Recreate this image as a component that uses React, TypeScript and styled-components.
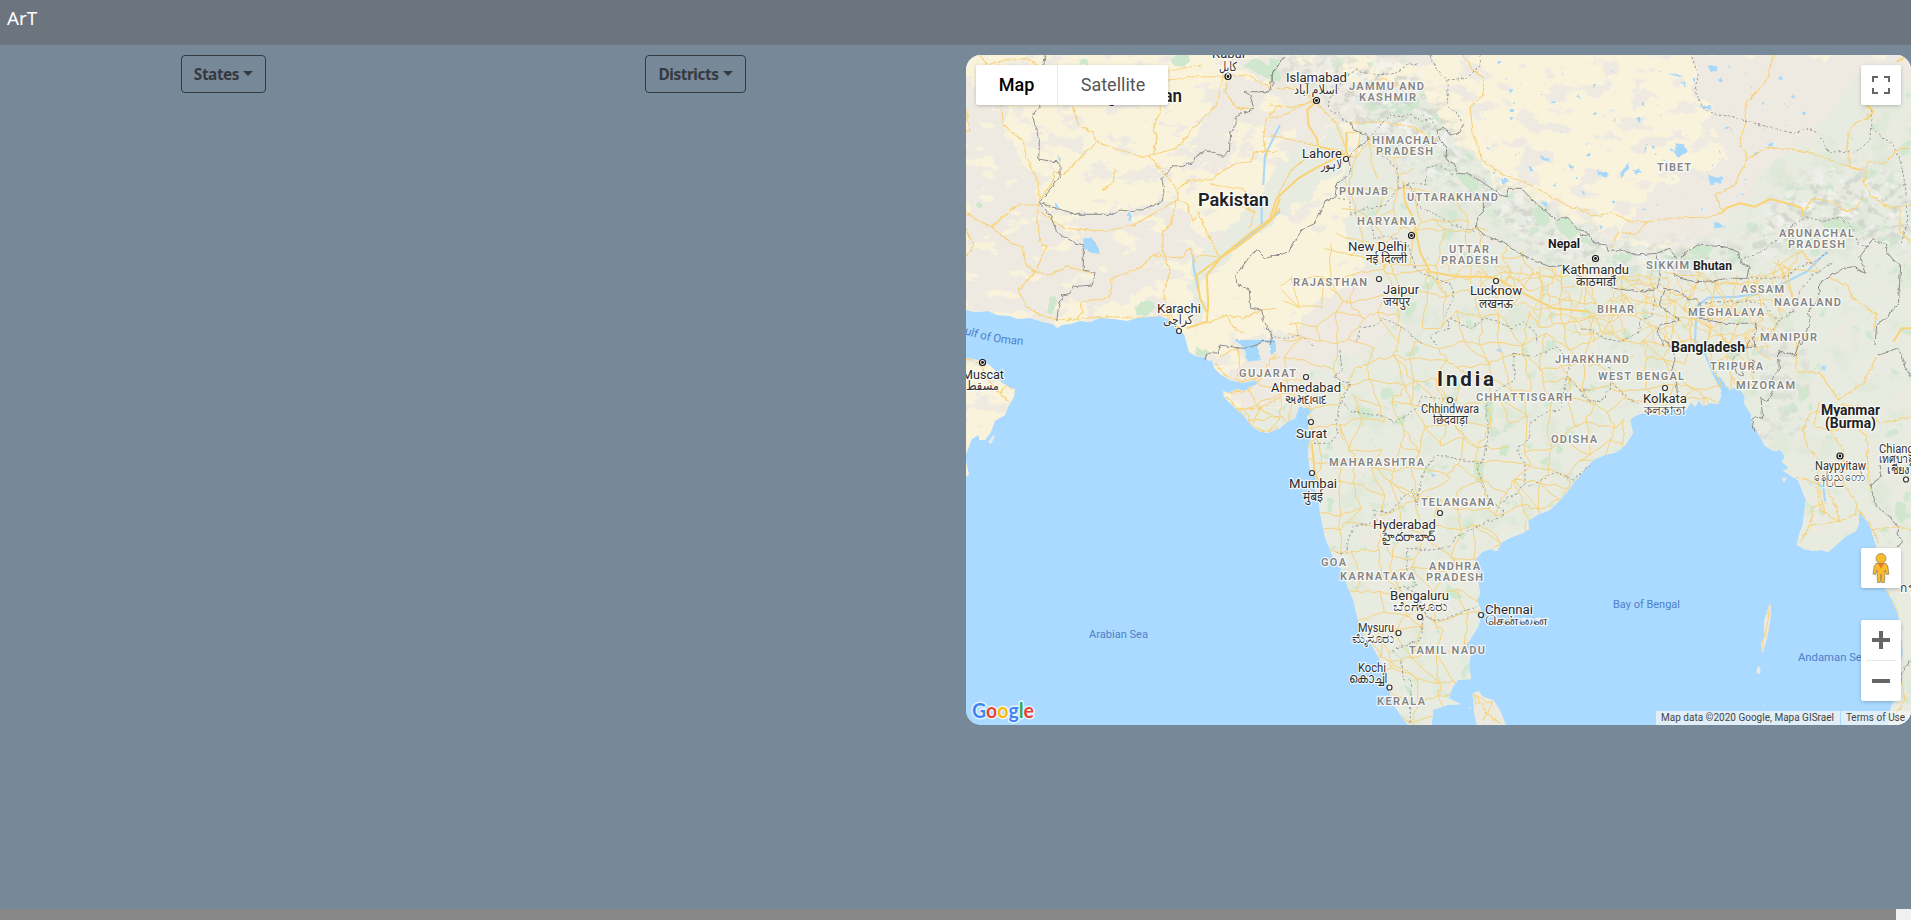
import React from 'react';
import styled, { createGlobalStyle } from 'styled-components';

const GlobalStyle = createGlobalStyle`
  * { box-sizing: border-box; }
  html, body { margin: 0; height: 100%; overflow: hidden; }
  body { background: #778899; font-family: "Noto Sans", "Open Sans", sans-serif; }
`;

const Page = styled.div`
  display: flex;
  flex-direction: column;
  height: 920px;
  background: #778899;
`;
const Navbar = styled.header`
  height: 45px;
  padding: 4px 7px;
  background: #6c757d;
`;
const Brand = styled.span`
  display: block;
  color: #fff;
  font-size: 18.8px;
  line-height: 28px;
`;
const Content = styled.main`
  flex: 1;
  display: grid;
  grid-template-columns: 447px 497px 1fr;
  padding-top: 10px;
`;
const Column = styled.section`
  display: flex;
  justify-content: center;
  align-items: flex-start;
`;
const DropdownButton = styled.button<{ $width: number }>`
  display: flex;
  align-items: center;
  justify-content: center;
  gap: 4px;
  width: ${(p) => p.$width}px;
  height: 38px;
  padding: 0;
  border: 1px solid #343a40;
  border-radius: 4px;
  background: transparent;
  color: #343a40;
  font: 700 15.4px "Noto Sans", sans-serif;
  letter-spacing: -0.45px;
  &::after {
    content: "";
    margin-top: -1px;
    border-top: 5px solid #343a40;
    border-left: 5px solid transparent;
    border-right: 5px solid transparent;
  }
`;
const ScrollTrack = styled.footer`
  display: flex;
  justify-content: flex-end;
  height: 11px;
  background: #888;
`;
const ScrollCorner = styled.div`
  width: 15px;
  background: #f0f0f0;
`;
const MapFrame = styled.div`
  position: relative;
  height: 670px;
  margin-left: 22px;
  overflow: hidden;
  border-radius: 15px;
  background: #aadaff;
  font-family: Roboto, sans-serif;
`;
const MapDrawing = styled.svg`
  display: block;
  width: 100%;
  height: 100%;
`;
const Control = styled.div<{ $top: number; $height?: number }>`
  position: absolute;
  right: 10px;
  top: ${(p) => p.$top}px;
  width: 40px;
  height: ${(p) => p.$height ?? 40}px;
  display: flex;
  flex-direction: column;
  align-items: center;
  justify-content: center;
  border-radius: 2px;
  background: #fff;
  box-shadow: 0 1px 4px -1px rgba(0, 0, 0, 0.35);
`;
const MapTypes = styled.div`
  position: absolute;
  left: 10px;
  top: 10px;
  display: flex;
  height: 40px;
  border-radius: 2px;
  overflow: hidden;
  background: #fff;
  box-shadow: 0 1px 4px -1px rgba(0, 0, 0, 0.35);
`;
const MapType = styled.div<{ $active?: boolean }>`
  width: ${(p) => (p.$active ? 82 : 110)}px;
  text-align: center;
  font-size: 18px;
  line-height: 40px;
  font-weight: ${(p) => (p.$active ? 500 : 400)};
  color: ${(p) => (p.$active ? '#000' : '#565656')};
  border-right: ${(p) => (p.$active ? '1px solid #e9e9e9' : '0')};
`;
const ZoomHalf = styled.div`
  display: flex;
  align-items: center;
  justify-content: center;
  height: 40px;
  width: 40px;
`;
const ZoomRule = styled.div`
  width: 30px;
  height: 1px;
  background: #e6e6e6;
`;
const Attribution = styled.div`
  position: absolute;
  right: 0;
  bottom: 0;
  display: flex;
  gap: 1px;
  height: 14px;
`;
const Credit = styled.span<{ $width: number }>`
  width: ${(p) => p.$width}px;
  padding-right: 1px;
  text-align: center;
  background: rgba(245, 245, 245, 0.72);
  color: #444;
  font-size: 10px;
  line-height: 14px;
  white-space: nowrap;
`;

/* ---- Geography. Each sheet has an origin; its points are in thirds of a pixel. ---- */
type Sheet = 'nw' | 'n' | 'ne' | 'sw' | 's' | 'se';
const origins: Record<Sheet, [number, number]> = {
  nw: [960, 45], n: [1270, 45], ne: [1580, 45],
  sw: [960, 340], s: [1270, 340], se: [1580, 340],
};

const LAND = 'M940 309L966 310 975 312 988 311 997 315 1010 316 1017 319 1030 318 1043 322 1053 324 1057 328 1062 325 1071 324 1080 321 1090 322 1100 318 1113 319 1127 321 1137 318 1147 317 1160 316 1170 320 1174 325 1177 330 1184 334 1187 345 1189 352 1195 356 1205 357 1208 361 1212 360 1214 368 1220 374 1230 380 1243 383 1255 380 1258 384 1250 387 1245 391 1236 389 1229 393 1223 391 1224 397 1234 407 1243 415 1253 427 1259 431 1267 433 1280 428 1287 422 1295 418 1299 407 1303 406 1305 412 1308 420 1308 430 1312 437 1308 446 1308 455 1310 470 1316 478 1315 488 1319 500 1320 513 1325 537 1333 557 1342 570 1348 588 1353 599 1358 620 1365 638 1371 644 1380 660 1386 677 1389 690 1395 707 1402 717 1408 725 1408 735 1431 735 1433 710 1447 705 1460 704 1449 698 1452 688 1458 680 1471 679 1469 665 1471 653 1466 646 1471 638 1478 627 1482 613 1477 600 1480 594 1477 573 1475 560 1482 552 1490 549 1497 551 1502 542 1512 537 1523 533 1529 529 1528 521 1537 515 1550 510 1560 500 1567 492 1575 481 1583 472 1593 460 1605 455 1617 452 1626 444 1633 433 1630 420 1635 416 1643 413 1652 415 1663 415 1672 412 1680 413 1686 410 1691 402 1695 407 1699 400 1703 406 1711 403 1718 404 1721 396 1727 391 1734 388 1740 389 1745 397 1744 403 1751 414 1751 422 1758 433 1765 446 1774 451 1780 450 1785 456 1782 462 1789 468 1783 471 1798 480 1802 490 1806 500 1804 515 1803 524 1799 535 1797 545 1804 549 1813 551 1822 550 1828 552 1836 545 1845 537 1856 531 1859 524 1859 512 1869 523 1873 536 1876 545 1878 560 1883 572 1885 588 1892 600 1898 614 1901 630 1903 654 1898 672 1899 690 1891 707 1888 725 1888 735 1940 735 1940 30 940 30Z';
const OMAN = 'M940 355L966 358 977 360 983 360 994 369 1001 382 1009 387 1015 389 1014 397 1008 407 1005 415 995 421 991 432 985 440 979 440 979 435 972 439 968 449 965 457 969 474 965 478 940 480Z';
const GREEN = 'M1365 100L1370 110 1358 130 1362 150 1345 165 1338 180 1350 205 1346 240 1362 262 1385 288 1398 320 1370 350 1325 363 1292 385 1282 410 1262 400 1210 450 1250 735 1940 735 1940 85 1860 70 1820 130 1775 160 1735 210 1690 248 1640 247 1580 225 1500 185 1447 130 1420 85 1400 85Z';
const HIMAL = 'M1240 50L1330 60 1400 55 1455 120 1462 160 1510 188 1570 220 1620 247 1690 243 1745 245 1790 180 1840 165 1911 180 1911 250 1850 240 1780 250 1690 275 1600 266 1540 255 1480 205 1440 185 1400 155 1350 120 1320 90Z';
const BEIGE = [
  'M966 75L1000 95 1012 140 1036 180 1050 220 1085 245 1082 290 1060 315 966 308Z',
  'M1240 60L1320 60 1390 110 1330 130 1290 160 1255 120 1225 165 1180 170 1200 120Z',
  'M1080 215L1140 205 1180 200 1205 250 1150 290 1100 310 1070 300Z',
  'M1240 345L1290 330 1370 260 1410 300 1420 360 1300 390 1250 420 1230 390Z',
  'M1690 55L1911 55 1911 150 1840 165 1770 215 1700 243 1620 238 1650 190 1730 160 1700 100Z',
  'M1420 510L1460 530 1440 590 1400 600 1380 550Z',
  'M1820 430L1840 430 1845 465 1815 455Z',
];

const borders: [Sheet, string][] = [
  ['nw', '255,30 252,60 240,180 218,215 238,285 236,343 300,352 300,395 238,472 345,508 460,508 480,495 520,500 560,488 605,472 612,440 606,400 640,362 665,365 700,352 705,335 735,317 765,323 790,335 808,320 812,265 828,240 828,210 882,192 870,150 850,140 925,140 940,120 935,90 955,60'],
  ['nw', '238,472 270,510 290,560 310,575 350,595 370,600 370,675 405,682 397,720 340,725 330,745 308,750 295,790 290,830'],
  ['nw', '960,628 915,640 895,618 880,620 828,690 830,715 868,735 872,790 905,795 910,825 935,870 930,900'],
  ['sw', '940,5 905,5 890,15 850,25 810,20 780,15 775,38 740,40 735,58'],
  ['n', '0,635 55,622 95,555 135,535 165,470 195,455 200,420 245,380 235,340 270,300 297,285 295,272 250,255 245,237'],
  ['n', '0,130 10,80 45,35'],
  ['n', '500,255 512,290 530,305 528,345 555,360 560,385 600,388 650,420 690,450 710,455 715,430 755,430 785,465 860,525 890,515 920,550 960,570'],
  ['n', '505,255 525,250 540,270 570,262 580,240'],
  ['n', '640,470 640,500 620,520 620,550 650,575 700,590 740,620 800,650 840,665 880,660 920,690 960,710'],
  ['ne', '0,567 30,575 45,595 80,600 85,620 120,615 170,630 230,625 270,610 290,640 280,685 300,700 345,710 400,708 440,700 500,700 508,665 485,655 475,620 430,605 350,600 320,620 300,650'],
  ['ne', '0,705 40,700 100,730 180,740 235,730 240,680 230,625'],
  ['ne', '250,730 300,740 325,765 345,760 360,775 360,820 430,835 525,835 530,855 520,880 525,905 490,910'],
  ['ne', '255,735 238,780 270,805 298,825 240,840 230,865 245,880 250,900'],
  ['ne', '880,580 890,590 920,595 920,620 945,650 962,660 955,780 930,800 925,815 890,840 885,900'],
  ['ne', '880,580 840,635 855,685 820,665 790,670 750,695 720,715 715,760 685,800 690,830 680,870 660,900'],
  ['se', '250,0 280,25 285,60 275,90 290,130 292,170'],
  ['se', '510,0 495,25 455,60 470,100 490,110 488,70 520,60 525,100'],
  ['se', '660,0 645,45 595,32 598,90 580,110 575,165 560,185 543,175 548,235 525,230 515,240 525,275'],
  ['se', '885,40 900,45 950,25 965,40 975,80 993,110'],
  ['se', '900,375 905,410 870,435 890,500 930,530 955,565 955,590 970,600 960,615 948,620'],
  ['se', '993,960 965,1000 962,1030'],
];
const dashed: [Sheet, string][] = [
  ['n', '245,237 220,225 205,200 190,205 175,180 180,155 205,135 215,100 260,75 320,90 375,85 420,55 440,60'],
  ['n', '297,285 330,240 360,210 395,215 420,205 450,230 480,220 505,255'],
  ['n', '480,30 500,75 530,105 590,100 630,60 632,30'],
  ['n', '530,105 535,150 530,180 565,210 580,240'],
  ['n', '330,320 380,370 385,430 345,480 290,490 240,510 240,465 205,460'],
  ['n', '385,430 420,420 440,480 500,510 550,540 615,560'],
  ['n', '400,425 430,410 465,420 470,370 500,360 560,390'],
  ['n', '305,540 310,580 360,575 415,600 440,680 470,690 545,720 550,760 525,810 540,850 480,870 500,900'],
  ['n', '540,820 600,850 650,820 730,850 760,830 800,870 800,900'],
  ['n', '0,870 50,880 90,870 130,900'],
  ['n', '260,890 270,850 320,840 340,820 400,850 460,900'],
  ['ne', '335,35 355,90 345,135 370,190 410,210 460,215 540,240 640,265 680,250 715,265 745,320 830,320 870,285 875,190'],
  ['ne', '875,250 940,300 965,360 978,440 980,540 962,600'],
  ['ne', '0,850 35,855 70,880 120,890 175,865 180,825 215,815 225,760'],
  ['ne', '490,640 540,625 600,575 640,540 680,515 730,530 780,515 820,550 835,600 865,605'],
  ['ne', '500,700 560,700 620,695 650,670 720,640 745,620'],
  ['ne', '360,775 420,770 510,768 550,775 595,830 570,870 540,850'],
  ['ne', '595,830 640,800 660,740 700,690 760,650'],
  ['s', '210,30 215,90 190,110 240,130 215,180 240,215 350,230 370,250 440,205 455,170 560,180'],
  ['s', '210,185 200,240 205,280 180,310 130,310'],
  ['s', '730,40 790,50 860,20 900,60 890,110 930,150 960,150'],
  ['s', '730,45 735,120 680,150 650,200 655,280 640,360 620,380 640,440 660,480 700,510 700,530 650,545 590,575 560,590 540,620 480,630 410,625 410,690 440,740 360,745'],
  ['s', '780,290 780,250 830,215 870,210 890,110'],
  ['s', '780,290 740,330 765,370 765,430 740,460 690,490'],
  ['s', '640,370 580,360 500,345 465,390 450,430 440,500 430,450 400,470 360,520 310,510 320,545 250,560 235,600 230,640 195,640'],
  ['s', '775,440 860,395 910,420 960,375'],
  ['s', '410,745 440,760 470,830 500,845 540,830 620,800'],
  ['s', '460,835 450,900 400,920 365,930 395,960 400,1020 425,1020 420,1150'],
  ['se', '0,150 20,180 60,185 90,150 95,100 70,50 30,40'],
  ['se', '95,130 150,180 180,190'],
];
const tracedRoads: [Sheet, string][] = [
  ['nw', '115,60 130,240 190,290 200,340 235,410 238,475 230,510 240,590 258,605 228,680 175,735 200,785 240,810 290,825'],
  ['nw', '18,500 50,525 95,545 155,595 185,605 200,660 225,680 270,690 320,665 400,685'],
  ['nw', '95,545 170,480 240,480'],
  ['nw', '18,190 30,255 18,265'], ['nw', '18,550 40,600 18,635'], ['nw', '60,30 80,60 130,45 200,40 240,65'],
  ['nw', '340,185 355,240 395,260 410,290 310,390 280,380 280,410 240,460'],
  ['nw', '410,290 460,310 545,335 580,330 585,300 590,270 578,250 600,200 605,110'],
  ['nw', '565,332 650,310 700,250 770,180 790,90 810,95'],
  ['nw', '625,105 700,95 800,95 860,90 920,120 935,135'],
  ['nw', '800,110 795,140 830,190 875,190'],
  ['nw', '565,332 600,370 650,430 655,465 680,475 700,530 715,500 740,560 780,640'],
  ['nw', '240,500 310,550 440,558 520,540 610,490 650,465 630,540 610,560 608,620 580,630 540,670 455,700 455,730 445,760 360,770 370,800 340,830'],
  ['nw', '655,430 690,405 750,405 800,370 830,355 870,350 880,325 910,318 950,320'],
  ['nw', '580,630 620,635 665,640 690,610 705,650 720,630 770,635'],
  ['nw', '750,415 780,425 850,430 865,470 835,480 885,500 870,550'],
  ['nw', '610,620 630,680 610,740 625,820 660,855'],
  ['nw', '290,825 350,822 440,815 540,820 580,815 630,810 660,855'],
  ['nw', '740,835 800,810 850,820 900,795 950,790'],
  ['nw', '800,810 820,850 850,865'], ['nw', '725,60 665,70 625,80'],
  ['nw', '465,370 460,410 425,440'], ['nw', '960,180 920,220 910,280 920,340'],
  ['n', '0,180 60,185 135,170 200,235 230,320'], ['n', '20,130 90,130 130,165 40,210 0,220'], ['n', '0,270 90,290 145,305 60,380 20,460'],
  ['n', '240,235 330,230 430,245 500,290'], ['n', '255,140 340,100 440,150'],
  ['ne', '585,30 570,60 565,100 530,140 495,180 498,230 480,290 505,340 480,380 465,420 405,450 430,500 400,515 270,520 200,530 150,530 90,500 50,515 0,495'],
  ['ne', '505,340 560,310 610,310 680,320 740,340 790,360 850,375 865,350 910,355 960,310 990,310'],
  ['ne', '865,200 860,220 820,240 805,270 800,320 815,370 865,380 850,410 870,450 930,490 993,480'],
  ['ne', '200,530 170,570 115,560 95,610'],
  ['ne', '670,500 700,460 760,470 800,500 825,490 850,460'],
  ['ne', '960,490 960,560 993,590'],
  ['ne', '750,700 800,720 820,760 890,810 880,860'],
  ['n', '580,30 610,75 640,100 640,150 600,185 610,270 640,350 700,390 760,410 820,440 860,465 910,490 960,495'],
  ['s', '35,120 100,120'],
  ['se', '650,0 650,95 720,100 775,180 850,130 890,50'],
  ['se', '690,220 735,215 790,195 850,200 900,250 993,230'],
  ['se', '690,220 670,270 680,320 710,350 715,430 735,520'],
  ['se', '720,180 700,260 750,270 830,260 860,290 865,400 870,450'],
  ['se', '750,270 790,330 790,430 830,490 830,520 780,545 690,555 660,610'],
  ['se', '710,440 720,510 780,545 760,480 740,450'],
  ['se', '645,410 720,430'], ['se', '835,510 870,550 895,610'], ['se', '840,520 870,570 950,560 993,570'],
  ['se', '920,750 950,810 955,830'], ['se', '690,550 700,500 740,490'],
  ['se', '570,790 565,830 560,860 550,900 546,930'],
  ['se', '960,1000 975,1080 950,1120'],
  ['sw', '18,55 60,70 80,110 120,160 150,190'], ['sw', '120,160 140,135 160,150'],
  ['sw', '795,165 830,205 880,260 920,275 955,260'], ['sw', '830,205 900,205 960,170'], ['sw', '880,250 900,205 865,150 800,160'], ['sw', '900,205 940,230 960,240'],
  ['sw', '765,70 800,110 850,125 900,110'], ['sw', '780,50 830,25 840,60 835,110'],
  ['sw', '865,150 910,110 930,60 960,50'],
  ['s', '620,1070 650,1120 690,1150'], ['s', '620,1090 670,1085 640,1140'],
];
const trunkRoads: [Sheet, string][] = [
  ['n', '138,170 112,195 115,240 140,280 145,305 220,320'], ['n', '0,520 20,460 85,400 145,365 225,325'],
  ['n', '230,260 228,320 240,340'], ['n', '400,410 405,470 430,520 440,570 450,620 480,680 560,695 640,695 680,700 740,735 850,790 960,800'],
  ['nw', '960,460 940,515 870,565 790,630 740,690 745,780 740,830 680,850'],
  ['nw', '960,490 930,530 840,600 780,640 710,690 720,760 740,800'],
  ['ne', '430,500 440,488 480,475 525,485 570,462 640,480 665,490 670,515'],
  ['ne', '860,180 880,200 860,225'], ['ne', '940,890 965,850 993,850'],
  ['ne', '990,30 950,50'],
  ['s', '125,310 135,400 150,430'], ['s', '500,510 520,520'],
];
const waters: [Sheet, string][] = [
  ['nw', '370,580 395,578 410,595 420,627 390,622 370,610'], ['nw', '505,500 512,502 512,528 503,525'],
  ['nw', '283,475 300,485 290,490'], ['nw', '290,335 303,340 300,350'],
  ['ne', '270,310 285,318 288,295 312,298 320,320 295,338 290,325 272,320'],
  ['ne', '385,390 410,398 435,395 420,415 388,418'], ['ne', '50,378 85,385 80,398 50,390'],
  ['ne', '120,385 140,360 142,350 148,370 125,395'], ['ne', '387,60 412,65 410,78 390,80'],
  ['ne', '160,378 175,370 185,380 165,388'], ['ne', '355,185 390,180 395,195'], ['ne', '300,110 320,115 315,125 310,120'],
  ['ne', '400,525 435,545 405,550'], ['ne', '445,60 450,65 447,72'], ['ne', '0,435 15,442 14,450'],
  ['ne', '260,85 310,92 295,97'], ['ne', '195,300 200,310 192,330'], ['ne', '60,540 70,545 65,555'],
  ['n', '810,330 835,340 840,350 820,345'], ['n', '695,400 720,405 700,415'], ['n', '770,360 790,370 785,380'],
  ['n', '680,45 695,50 680,60'], ['n', '710,135 730,132 725,142'], ['n', '895,355 910,365 905,375'],
  ['sw', '825,0 850,20 860,65 900,60 890,15 940,0'], ['s', '0,0 15,0 18,30 0,50'],
  ['s', '90,200 130,210 110,230 115,260 80,250'],
  ['s', '675,30 690,25 700,32'], ['s', '480,400 500,405 485,412'],
  ['se', '725,80 740,78 735,90'], ['se', '395,60 410,100 450,150 430,180 415,120'],
];
const rivers: [Sheet, string][] = [
  ['ne', '345,890 348,830 355,780 385,758 470,755 540,745 610,715 680,680 740,620'],
  ['nw', '910,420 915,330 960,240'], ['nw', '905,540 905,480'],
  ['nw', '960,500 870,570 780,640'], ['nw', '700,630 700,660 715,735'],
  ['se', '345,0 375,40 400,100 420,140'], ['se', '710,430 730,440 735,485'],
];
const islands: [Sheet, string][] = [
  ['se', '568,790 573,795 572,830 568,860 560,900 550,935 545,938 543,910 552,890 552,840 560,820'],
  ['se', '530,985 538,978 542,990 538,1002 530,1000'],
  ['s', '608,1060 625,1053 640,1070 670,1080 690,1110 708,1155 620,1155 612,1120'],
  ['s', '595,1100 605,1105 598,1106'], ['s', '545,1085 570,1090 568,1096'],
  ['sw', '85,305 100,285 105,290 92,313'], ['se', '605,415 622,412 612,428'], ['se', '550,1095 558,1098 552,1099'],
];
const greens: [Sheet, string][] = [
  ['nw', '630,45 650,30 690,30 690,50 670,65 640,62'], ['nw', '357,45 380,38 385,55 360,60'],
  ['nw', '525,790 550,765 580,770 585,790 555,815 530,810'], ['nw', '270,750 290,760 280,810 262,800'],
  ['nw', '850,60 890,40 960,80 960,115 900,90'], ['nw', '50,470 68,475 65,490 52,488'],
  ['n', '560,390 590,385 630,415 620,440 590,430'], ['n', '785,490 820,485 840,520 830,545 800,535'],
  ['n', '860,525 895,515 930,560 900,585 870,560'], ['n', '0,40 35,45 10,75 0,70'], ['n', '405,780 440,765 435,800 410,820'],
  ['n', '430,150 450,170 440,195 425,180'], ['n', '290,50 310,55 300,70'],
  ['ne', '320,620 350,600 400,610 375,640 345,630'], ['ne', '725,540 780,515 810,540 760,575 740,560'],
  ['ne', '100,630 160,625 150,650 110,645'], ['ne', '0,570 40,590 30,600 0,590'], ['ne', '450,825 500,820 490,835'], ['ne', '455,620 480,630 475,655'],
  ['sw', '708,25 745,30 740,50 705,45'],
  ['s', '255,200 300,205 315,230 270,235'], ['s', '380,230 410,220 400,260 380,250'], ['s', '610,360 640,365 640,430 615,420'],
  ['s', '640,190 670,180 665,250 645,240'], ['s', '530,730 580,770 560,780 530,760'], ['s', '175,470 190,480 185,520 172,510'],
  ['s', '690,320 720,310 710,350 690,345'], ['s', '760,320 790,310 780,330'], ['s', '400,1030 430,1050 420,1070'],
  ['se', '655,150 680,140 685,170 660,190'], ['se', '945,485 975,490 980,530 965,550 945,530'], ['se', '30,130 50,140 40,160'],
  ['s', '560,580 590,585 580,600'], ['s', '810,360 840,350 830,380'], ['s', '860,300 880,330 860,345'],
];

const toPath = ([sheet, pts]: [Sheet, string], close = false) => {
  const [ox, oy] = origins[sheet];
  return 'M' + pts.split(' ').map((p) => {
    const [x, y] = p.split(',').map(Number);
    return `${(ox + x / 3).toFixed(1)} ${(oy + y / 3).toFixed(1)}`;
  }).join('L') + (close ? 'Z' : '');
};
const joinPaths = (items: [Sheet, string][], close = false) => items.map((i) => toPath(i, close)).join('');

/* Local road network: a jittered lattice whose neighbours are joined by wavering lines. */
function roadMesh(x0: number, y0: number, x1: number, y1: number, step: number, seed: number) {
  let s = seed;
  const rnd = () => { s = (s * 1664525 + 1013904223) % 4294967296; return s / 4294967296; };
  const cols = Math.ceil((x1 - x0) / step), rows = Math.ceil((y1 - y0) / step);
  const pt: [number, number][][] = [];
  for (let r = 0; r <= rows; r++) {
    pt.push([]);
    for (let c = 0; c <= cols; c++) pt[r].push([x0 + (c + rnd() * 0.9) * step, y0 + (r + rnd() * 0.9) * step]);
  }
  let d = '';
  const link = (a: [number, number], b: [number, number]) => {
    d += `M${a[0].toFixed(1)} ${a[1].toFixed(1)}`;
    for (let i = 1; i < 4; i++) {
      const t = i / 4;
      d += `L${(a[0] + (b[0] - a[0]) * t + (rnd() - 0.5) * 4).toFixed(1)} ${(a[1] + (b[1] - a[1]) * t + (rnd() - 0.5) * 4).toFixed(1)}`;
    }
    d += `L${b[0].toFixed(1)} ${b[1].toFixed(1)}`;
  };
  for (let r = 0; r < rows; r++) for (let c = 0; c < cols; c++) {
    if (rnd() < 0.8) link(pt[r][c], pt[r][c + 1]);
    if (rnd() < 0.75) link(pt[r][c], pt[r + 1][c]);
    if (rnd() < 0.22) link(pt[r][c], pt[r + 1][c + 1]);
  }
  return d;
}
const mesh = roadMesh(1220, 100, 1800, 730, 21, 77);
const denseMesh = roadMesh(1420, 255, 1800, 350, 14, 19);
const MESH_AREA = 'M1345 120L1400 155 1425 180 1480 205 1490 238 1560 265 1660 268 1740 275 1790 255 1830 240 1820 270 1790 300 1765 380 1735 400 1700 440 1640 470 1560 540 1490 560 1490 700 1400 730 1300 560 1300 450 1250 435 1220 395 1270 360 1290 330 1280 285 1335 240 1345 190Z';
const DENSE_AREA = 'M1430 262L1560 268 1740 282 1790 260 1770 350 1600 345 1500 300Z';

/* ---- Labels: text, left, right, baseline ---- */
type Label = [string, number, number, number];
const regions: Label[] = [
  ['JAMMU AND', 1349, 1424, 90], ['KASHMIR', 1359, 1416, 101], ['HIMACHAL', 1372, 1437, 144], ['PRADESH', 1376, 1433, 155],
  ['PUNJAB', 1339, 1388, 195], ['UTTARAKHAND', 1407, 1498, 201], ['HARYANA', 1357, 1416, 225], ['UTTAR', 1449, 1489, 253],
  ['PRADESH', 1441, 1498, 264], ['RAJASTHAN', 1293, 1367, 286], ['TIBET', 1657, 1691, 171], ['ARUNACHAL', 1779, 1854, 237],
  ['PRADESH', 1788, 1845, 248], ['SIKKIM', 1646, 1689, 269], ['ASSAM', 1741, 1784, 293], ['NAGALAND', 1774, 1841, 306],
  ['BIHAR', 1597, 1634, 313], ['MEGHALAYA', 1688, 1764, 316], ['MANIPUR', 1760, 1817, 341], ['GUJARAT', 1239, 1296, 377],
  ['CHHATTISGARH', 1476, 1572, 401], ['MAHARASHTRA', 1329, 1424, 466], ['TELANGANA', 1421, 1494, 506], ['GOA', 1321, 1346, 566],
  ['KARNATAKA', 1340, 1415, 580], ['ANDHRA', 1429, 1480, 570], ['PRADESH', 1426, 1483, 581], ['TAMIL NADU', 1409, 1485, 654],
  ['KERALA', 1377, 1425, 705], ['JHARKHAND', 1555, 1629, 363], ['ODISHA', 1551, 1597, 443], ['TRIPURA', 1710, 1763, 370],
  ['WEST BENGAL', 1598, 1684, 380], ['MIZORAM', 1736, 1795, 389],
];
const cities: Label[] = [
  ['Kabul', 1212, 1245, 58], ['Islamabad', 1286, 1347, 82], ['Lahore', 1302, 1342, 158], ['New Delhi', 1348, 1407, 251],
  ['Jaipur', 1383, 1419, 294], ['Lucknow', 1470, 1522, 295], ['Kathmandu', 1562, 1629, 274], ['Karachi', 1157, 1201, 313],
  ['Muscat', 962, 1004, 379], ['Ahmedabad', 1271, 1341, 391.5], ['Surat', 1296, 1327, 438], ['Mumbai', 1289, 1337, 488],
  ['Hyderabad', 1373, 1436, 529], ['Bengaluru', 1390, 1449, 600], ['Chennai', 1485, 1533, 614], ['Kolkata', 1643, 1687, 403],
];
const towns: Label[] = [
  ['Chhindwara', 1421, 1479, 413], ['Mysuru', 1358, 1394, 632], ['Kochi', 1358, 1386, 672], ['Naypyitaw', 1815, 1866, 470],
  ['Chiang Mai', 1879, 1935, 453],
];
const locals: Label[] = [
  ['كابل', 1219, 1237, 71], ['اسلام آباد', 1294, 1338, 94], ['لاہور', 1321, 1342, 169], ['नई दिल्ली', 1366, 1407, 262.5],
  ['जयपुर', 1383, 1410, 306], ['लखनऊ', 1479, 1513, 308], ['काठमाडौं', 1576, 1616, 286], ['كراچى', 1163, 1193, 324],
  ['مسقط', 966, 999, 390], ['અમદાવાદ', 1285, 1327, 404], ['छिंदवाड़ा', 1433, 1468, 424], ['मुंबई', 1303, 1323, 500.5],
  ['హైదరాబాద్', 1382, 1436, 541], ['ಬೆಂಗಳೂರು', 1393, 1447, 611], ['ಮೈಸೂರು', 1352, 1394, 643],
  ['കൊച്ചി', 1349, 1387, 683], ['কলকাতা', 1644, 1686, 415], ['နေပြည်တော်', 1814, 1866, 481], ['เทศบาล', 1879, 1915, 463],
  ['เชียงให', 1887, 1922, 474], ['กรุง', 1900, 1920, 592], ['சென்னை', 1485, 1548, 625],
];
const countries: Label[] = [
  ['Afghanistan', 1090, 1182, 102], ['Pakistan', 1198, 1269, 206],
];
const smallCountries: Label[] = [
  ['Nepal', 1548, 1580, 248], ['Bhutan', 1693, 1732, 270],
];
const midCountries: Label[] = [['Bangladesh', 1671, 1745, 352], ['Myanmar', 1821, 1880, 415], ['(Burma)', 1825, 1876, 428]];
const seas: Label[] = [['Arabian Sea', 1089, 1148, 638], ['Bay of Bengal', 1613, 1680, 608], ['Andaman Sea', 1798, 1868, 661]];
const dots = [[1346, 159], [1379, 279], [1496, 281], [1179, 331], [1306, 377], [1311, 422], [1450, 400], [1312, 473], [1440, 513], [1420, 617], [1481, 615], [1398.5, 633], [1389.5, 687.5], [1665, 388], [1906, 479.5]];
const capitals = [[1228, 76.5], [1316.5, 100.5], [1411.5, 235.5], [1595.5, 258.5], [982.5, 362.5], [1840, 456]];

const MapText = styled.text<{ $size: number; $color: string; $weight?: number }>`
  font-family: Roboto, "Noto Sans", "DejaVu Sans", sans-serif;
  font-size: ${(p) => p.$size}px;
  font-weight: ${(p) => p.$weight ?? 400};
  fill: ${(p) => p.$color};
  paint-order: stroke;
  stroke: rgba(255, 255, 255, 0.8);
  stroke-width: 2.4px;
  stroke-linejoin: round;
`;
const SeaText = styled.text`
  font-family: Roboto, sans-serif;
  font-size: 11.5px;
  fill: #4f7fc9;
`;

function Labels({ items, size, color, weight, spaced }: { items: Label[]; size: number; color: string; weight?: number; spaced?: boolean }) {
  return (
    <>
      {items.map(([text, l, r, y]) => (
        <MapText key={text + l} x={l} y={y} textLength={r - l} lengthAdjust={spaced ? 'spacing' : 'spacingAndGlyphs'} $size={size} $color={color} $weight={weight}>
          {text}
        </MapText>
      ))}
    </>
  );
}

/* Threshold filter that turns noise into flat patches of one colour. */
function Patches({ id, fx, fy, seed, gain, cut, color }: { id: string; fx: number; fy: number; seed: number; gain: number; cut: number; color: string }) {
  return (
    <filter id={id} x="0" y="0" width="100%" height="100%" colorInterpolationFilters="sRGB">
      <feTurbulence type="fractalNoise" baseFrequency={`${fx} ${fy}`} numOctaves={4} seed={seed} />
      <feColorMatrix values={`0 0 0 0 0  0 0 0 0 0  0 0 0 0 0  ${gain} 0 0 0 ${-gain * cut}`} result="m" />
      <feFlood floodColor={color} />
      <feComposite in2="m" operator="in" />
    </filter>
  );
}

function Terrain() {
  const area = { x: 966, y: 55, width: 945, height: 670 };
  return (
    <MapDrawing viewBox="966 55 945 670">
      <defs>
        <clipPath id="land"><path d={LAND} /><path d={OMAN} /></clipPath>
        <clipPath id="roads"><path d={LAND} /><path d={OMAN} /><path d={joinPaths(islands, true)} /></clipPath>
        <clipPath id="green"><path d={GREEN} /></clipPath>
        <clipPath id="mesh"><path d={MESH_AREA} /></clipPath>
        <clipPath id="dense"><path d={DENSE_AREA} /></clipPath>
        <filter id="rough" x="-5%" y="-5%" width="110%" height="110%">
          <feTurbulence type="fractalNoise" baseFrequency="0.06" numOctaves={3} seed={4} result="n" />
          <feDisplacementMap in="SourceGraphic" in2="n" scale={22} xChannelSelector="R" yChannelSelector="G" />
          <feGaussianBlur stdDeviation="0.6" />
        </filter>
        <filter id="edge" x="-5%" y="-5%" width="110%" height="110%">
          <feTurbulence type="fractalNoise" baseFrequency="0.2" numOctaves={2} seed={9} result="n" />
          <feDisplacementMap in="SourceGraphic" in2="n" scale={4} xChannelSelector="R" yChannelSelector="G" />
        </filter>
        <filter id="soft"><feGaussianBlur stdDeviation="9" /></filter>
        <mask id="himal"><path d={HIMAL} fill="#fff" filter="url(#soft)" /></mask>
        <Patches id="sand" fx={0.035} fy={0.06} seed={3} gain={14} cut={0.56} color="#eeeae2" />
        <Patches id="cream" fx={0.035} fy={0.07} seed={21} gain={14} cut={0.62} color="#faf3dc" />
        <Patches id="moss" fx={0.03} fy={0.03} seed={8} gain={10} cut={0.6} color="#dfe9d8" />
        <Patches id="leaf" fx={0.05} fy={0.05} seed={12} gain={14} cut={0.7} color="#c8e6cb" />
        <Patches id="rock" fx={0.09} fy={0.12} seed={5} gain={6} cut={0.5} color="#cdd0c8" />
        <Patches id="snow" fx={0.08} fy={0.1} seed={31} gain={7} cut={0.56} color="#f4f4f2" />
        <Patches id="fern" fx={0.04} fy={0.06} seed={15} gain={9} cut={0.64} color="#c9e2c9" />
        <Patches id="pond" fx={0.12} fy={0.12} seed={44} gain={20} cut={0.77} color="#a6d8fb" />
      </defs>
      <rect {...area} fill="#aadaff" />
      <g clipPath="url(#land)">
        <rect {...area} fill="#faf3dc" />
        <g filter="url(#rough)">{BEIGE.map((d) => <path key={d} d={d} fill="#eeeae2" />)}</g>
        <rect {...area} filter="url(#sand)" />
        <g filter="url(#rough)"><path d={GREEN} fill="#e7ebe0" /></g>
        <g clipPath="url(#green)">
          <rect {...area} filter="url(#moss)" opacity="0.8" />
          <rect {...area} filter="url(#sand)" opacity="0.5" />
          <rect {...area} filter="url(#leaf)" opacity="0.7" />
        </g>
        <rect x="966" y="55" width="330" height="270" filter="url(#cream)" />
        <path d="M1220 250L1335 235 1350 255 1320 300 1260 330 1215 330 1240 295Z" fill="#faf3dc" filter="url(#rough)" />
        <path d="M1255 200L1290 150 1340 130 1355 150 1320 185 1290 210 1235 250 1200 285 1205 325 1190 320 1190 270 1205 250Z" fill="#e7ebe0" filter="url(#rough)" />
        <g mask="url(#himal)">
          <rect {...area} filter="url(#rock)" opacity="0.75" />
          <rect {...area} filter="url(#fern)" opacity="0.8" />
          <rect {...area} filter="url(#snow)" opacity="0.8" />
        </g>
        <g opacity="0.4"><rect x="1760" y="330" width="50" height="110" filter="url(#rock)" /></g>
        <rect x="1480" y="70" width="330" height="140" filter="url(#pond)" />
        <path d={joinPaths(greens, true)} fill="#cfe8cd" filter="url(#edge)" />
      </g>
      <path d={joinPaths(islands, true)} fill="#eceade" />
      <path d={joinPaths(waters, true)} fill="#a6d8fb" filter="url(#edge)" />
      <g fill="none" strokeLinejoin="round" clipPath="url(#roads)">
        <path d={joinPaths(rivers)} stroke="#a6d8fb" strokeWidth="2" />
        <g clipPath="url(#mesh)"><path d={mesh} stroke="#f7d27c" strokeWidth="1" /></g>
        <g clipPath="url(#dense)"><path d={denseMesh} stroke="#f7d27c" strokeWidth="0.8" /></g>
        <path d={joinPaths(tracedRoads)} stroke="#f8d27a" strokeWidth="1.15" filter="url(#edge)" />
        <path d={joinPaths(trunkRoads)} stroke="#fad374" strokeWidth="2" />
      </g>
      <g fill="none" stroke="#8d8d8b" strokeLinejoin="round" filter="url(#edge)">
        <path d={joinPaths(borders)} strokeWidth="1" />
        <path d={joinPaths(dashed)} strokeWidth="1" strokeDasharray="2.5 2" stroke="#9c9c99" />
      </g>

      {dots.map(([x, y]) => <circle key={`${x}`} cx={x} cy={y} r="2.5" fill="#fff" stroke="#333" strokeWidth="1.2" />)}
      {capitals.map(([x, y]) => (
        <g key={`${x}`}>
          <circle cx={x} cy={y} r="3" fill="#fff" stroke="#111" strokeWidth="1.2" />
          <circle cx={x} cy={y} r="1.4" fill="#111" />
        </g>
      ))}
      <Labels items={regions} size={11} color="#858585" weight={600} spaced />
      <Labels items={locals} size={12.5} color="#333" />
      <Labels items={cities} size={13.6} color="#2b2b2b" />
      <Labels items={towns} size={12} color="#333" />
      <Labels items={countries} size={17.5} color="#222" weight={600} />
      <Labels items={midCountries} size={14} color="#222" weight={700} />
      <Labels items={smallCountries} size={12} color="#222" weight={700} />
      <Labels items={[['India', 1437, 1494, 386]]} size={20.5} color="#222" weight={700} spaced />
      {seas.map(([t, l, r, y]) => <SeaText key={t} x={l} y={y} textLength={r - l} lengthAdjust="spacingAndGlyphs">{t}</SeaText>)}
      <path id="gulf" d="M957 331Q990 345 1034 345" fill="none" />
      <SeaText><textPath href="#gulf" textLength="68">Gulf of Oman</textPath></SeaText>
      <text x="972" y="718" textLength="62" lengthAdjust="spacingAndGlyphs" fontFamily="Lato, sans-serif" fontSize="20.5" fontWeight="700" stroke="#e8f4fd" strokeWidth="3" strokeLinejoin="round" paintOrder="stroke">
        <tspan fill="#4285f4">G</tspan><tspan fill="#ea4335">o</tspan><tspan fill="#fbbc05">o</tspan><tspan fill="#4285f4">g</tspan><tspan fill="#34a853">l</tspan><tspan fill="#ea4335">e</tspan>
      </text>
    </MapDrawing>
  );
}

export default function App() {
  return (
    <Page>
      <GlobalStyle />
      <Navbar><Brand>ArT</Brand></Navbar>
      <Content>
        <Column><DropdownButton $width={85}>States</DropdownButton></Column>
        <Column><DropdownButton $width={101}>Districts</DropdownButton></Column>
        <MapFrame>
          <Terrain />
          <MapTypes>
            <MapType $active>Map</MapType>
            <MapType>Satellite</MapType>
          </MapTypes>
          <Control $top={10}>
            <svg width="18" height="18" viewBox="0 0 18 18" fill="#666"><path d="M0 0h6v2H2v4H0zM12 0h6v6h-2V2h-4zM0 12h2v4h4v2H0zM16 12h2v6h-6v-2h4z" /></svg>
          </Control>
          <Control $top={493}>
            <svg width="18" height="30" viewBox="0 0 18 30" stroke="#8a7a5a" strokeWidth="0.7" fill="#fbbc2c">
              <path d="M4 10.5h10l1.7 2.5 1.3 8-2.3.6-1.6-4.6-.6 12.4H9.7L9 21l-.7 8.4H5.5L4.9 17l-1.6 4.6L1 21l1.3-8z" />
              <path d="M6 10.5h6l-3 5z" fill="#e8792b" stroke="none" />
              <circle cx="9" cy="5.5" r="5" />
            </svg>
          </Control>
          <Control $top={565} $height={81}>
            <ZoomHalf><svg width="18" height="18" fill="#666"><path d="M7 0h4v7h7v4h-7v7H7v-7H0V7h7z" /></svg></ZoomHalf>
            <ZoomRule />
            <ZoomHalf><svg width="18" height="18" fill="#666"><path d="M0 7h18v4H0z" /></svg></ZoomHalf>
          </Control>
          <Attribution>
            <Credit $width={184}>Map data ©2020 Google, Mapa GISrael</Credit>
            <Credit $width={70}>Terms of Use</Credit>
          </Attribution>
        </MapFrame>
      </Content>
      <ScrollTrack><ScrollCorner /></ScrollTrack>
    </Page>
  );
}
